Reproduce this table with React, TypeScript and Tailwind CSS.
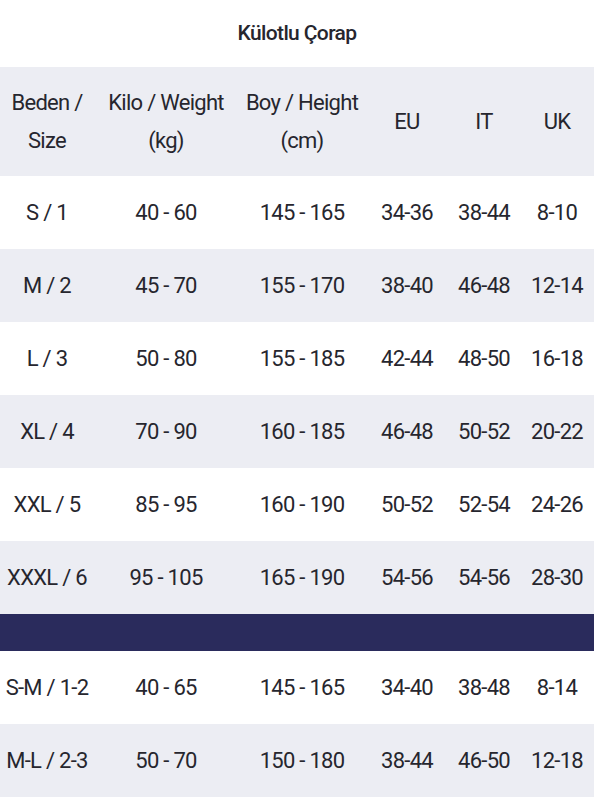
const rows = [
  ["S / 1", "40 - 60", "145 - 165", "34-36", "38-44", "8-10"],
  ["M / 2", "45 - 70", "155 - 170", "38-40", "46-48", "12-14"],
  ["L / 3", "50 - 80", "155 - 185", "42-44", "48-50", "16-18"],
  ["XL / 4", "70 - 90", "160 - 185", "46-48", "50-52", "20-22"],
  ["XXL / 5", "85 - 95", "160 - 190", "50-52", "52-54", "24-26"],
  ["XXXL / 6", "95 - 105", "165 - 190", "54-56", "54-56", "28-30"],
];

const extraRows = [
  ["S-M / 1-2", "40 - 65", "145 - 165", "34-40", "38-48", "8-14"],
  ["M-L / 2-3", "50 - 70", "150 - 180", "38-44", "46-50", "12-18"],
];

const cols = "grid grid-cols-[94px_144px_128px_82px_72px_74px]";

function Row({ cells, shaded }: { cells: string[]; shaded: boolean }) {
  return (
    <div className={`${cols} h-[73px] items-center ${shaded ? "bg-[#ecedf3]" : "bg-white"}`}>
      {cells.map((c, i) => (
        <div key={i} className="text-center whitespace-nowrap">
          {c}
        </div>
      ))}
    </div>
  );
}

export default function App() {
  return (
    <div
      className="w-[600px] h-[799px] bg-white overflow-hidden text-[#26262e] tracking-[-0.045em]"
      style={{ fontFamily: "Roboto, 'Liberation Sans', sans-serif" }}
    >
      <div className="w-[594px]">
        {/* Title */}
        <div className="h-[67px] flex items-center justify-center text-[21px] font-medium tracking-[-0.03em]">
          Külotlu Çorap
        </div>

        {/* Header */}
        <div className={`${cols} h-[109px] items-center bg-[#ecedf3] text-[22px] leading-[38px]`}>
          <div className="text-center">
            Beden /<br />Size
          </div>
          <div className="text-center whitespace-nowrap">
            Kilo / Weight<br />(kg)
          </div>
          <div className="text-center whitespace-nowrap">
            Boy / Height<br />(cm)
          </div>
          <div className="text-center">EU</div>
          <div className="text-center">IT</div>
          <div className="text-center">UK</div>
        </div>

        {/* Sizes */}
        <div className="text-[22px]">
          {rows.map((r, i) => (
            <Row key={r[0]} cells={r} shaded={i % 2 === 1} />
          ))}

          <div className="h-[37px] bg-[#2a2b5c]" />

          {extraRows.map((r, i) => (
            <Row key={r[0]} cells={r} shaded={i % 2 === 1} />
          ))}
        </div>
      </div>
    </div>
  );
}
